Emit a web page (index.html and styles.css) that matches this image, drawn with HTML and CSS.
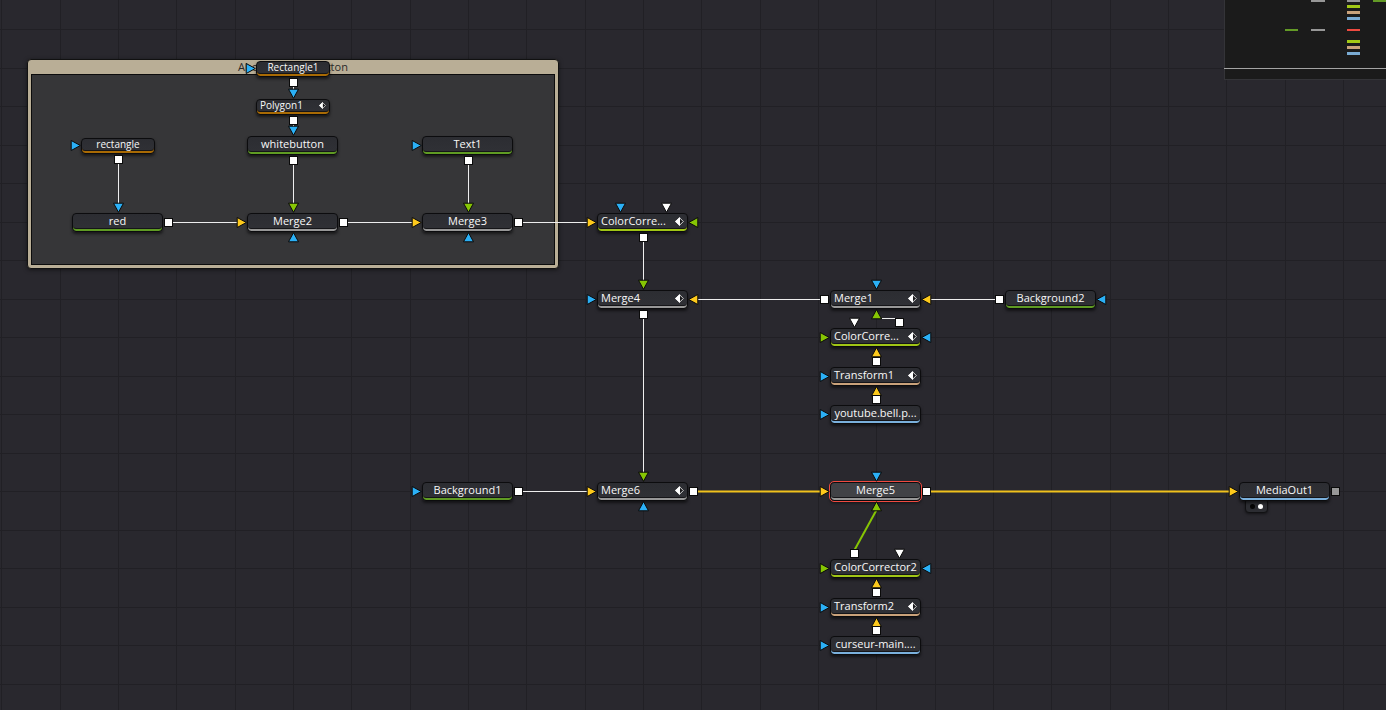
FILE: index.html
```html
<!DOCTYPE html>
<html lang="en">
<head>
<meta charset="utf-8">
<title>Node graph</title>
<link rel="stylesheet" href="styles.css">
</head>
<body>
<main class="graph">
  <section class="group">
    <h2 class="group-title">Abonnements button</h2>
    <div class="group-body"></div>
  </section>

  <svg class="wires" aria-hidden="true">
    <g class="wire">
      <path d="M118.500 164V204M293.500 87V90M293.500 125V127M293.500 165V204M468.500 165V204"/>
      <path d="M173 222.500H238M348 222.500H413M523 222.500H588"/>
      <path d="M643.500 242V281M643.500 319V473M698 299.500H820M931 299.500H995M882 318.500H896M523 491.500H588"/>
    </g>
    <path class="wire-yellow" d="M698 491.500H821M931 491.500H1230"/>
    <path class="wire-green" d="M854.500 550L876.500 510"/>
  </svg>

  <div class="node small brown n-rectangle"><span>rectangle</span></div>
  <div class="node small brown n-rectangle1"><span>Rectangle1</span></div>
  <div class="node small brown keyed n-polygon1"><span>Polygon1</span><svg class="key" viewBox="0 0 9 9"><use href="#key"/></svg></div>
  <div class="node green n-whitebutton"><span>whitebutton</span></div>
  <div class="node green n-text1"><span>Text1</span></div>
  <div class="node green n-red"><span>red</span></div>
  <div class="node gray n-merge2"><span>Merge2</span></div>
  <div class="node gray n-merge3"><span>Merge3</span></div>
  <div class="node lime keyed n-cc1"><span>ColorCorre...</span><svg class="key" viewBox="0 0 9 9"><use href="#key"/></svg></div>
  <div class="node gray keyed n-merge4"><span>Merge4</span><svg class="key" viewBox="0 0 9 9"><use href="#key"/></svg></div>
  <div class="node gray keyed n-merge1"><span>Merge1</span><svg class="key" viewBox="0 0 9 9"><use href="#key"/></svg></div>
  <div class="node green n-background2"><span>Background2</span></div>
  <div class="node lime keyed n-cc3"><span>ColorCorre...</span><svg class="key" viewBox="0 0 9 9"><use href="#key"/></svg></div>
  <div class="node tan keyed n-transform1"><span>Transform1</span><svg class="key" viewBox="0 0 9 9"><use href="#key"/></svg></div>
  <div class="node blue n-youtube"><span>youtube.bell.p...</span></div>
  <div class="node green n-background1"><span>Background1</span></div>
  <div class="node gray keyed n-merge6"><span>Merge6</span><svg class="key" viewBox="0 0 9 9"><use href="#key"/></svg></div>
  <div class="node gray selected n-merge5"><span>Merge5</span></div>
  <div class="node lime n-cc2"><span>ColorCorrector2</span></div>
  <div class="node tan keyed n-transform2"><span>Transform2</span><svg class="key" viewBox="0 0 9 9"><use href="#key"/></svg></div>
  <div class="node blue n-curseur"><span>curseur-main....</span></div>
  <div class="views"><i class="view"></i><i class="view on"></i></div>
  <div class="node blue n-mediaout1"><span>MediaOut1</span></div>

  <svg class="ports" aria-hidden="true">
    <defs>
      <path id="down" d="M-5 -4.300H5L0 4.800Z"/>
      <path id="up" d="M-5 4.300H5L0 -4.800Z"/>
      <path id="right" d="M-4.300 -5V5L4.800 0Z"/>
      <path id="left" d="M4.300 -5V5L-4.800 0Z"/>
      <rect id="out" x="-4" y="-4" width="8" height="8"/>
      <g id="key">
        <path d="M4.500 0.700L8.300 4.500L4.500 8.300L0.700 4.500Z" fill="#18181b" stroke="#d8d8d8"/>
        <path d="M5 0L0 4.500L5 9Z" fill="#fff"/>
      </g>
    </defs>
    <g class="port p-blue">
      <use href="#right" x="75.500" y="145.500"/>
      <use href="#right" x="250.500" y="68.500"/>
      <use href="#right" x="416.500" y="145.500"/>
      <use href="#right" x="591.500" y="299.500"/>
      <use href="#right" x="824.500" y="376.500"/>
      <use href="#right" x="824.500" y="414.500"/>
      <use href="#right" x="416.500" y="491.500"/>
      <use href="#right" x="824.500" y="607.500"/>
      <use href="#right" x="824.500" y="645.500"/>
      <use href="#left" x="1101.500" y="299.500"/>
      <use href="#left" x="926.500" y="337.500"/>
      <use href="#left" x="926.500" y="568.500"/>
      <use href="#down" x="118.500" y="207.500"/>
      <use href="#down" x="293.500" y="93.500"/>
      <use href="#down" x="293.500" y="130.500"/>
      <use href="#down" x="620.500" y="207.500"/>
      <use href="#down" x="876.500" y="284.500"/>
      <use href="#down" x="876.500" y="476.500"/>
      <use href="#up" x="293.500" y="237.500"/>
      <use href="#up" x="468.500" y="237.500"/>
      <use href="#up" x="643.500" y="506.500"/>
    </g>
    <g class="port p-yellow">
      <use href="#right" x="241.500" y="222.500"/>
      <use href="#right" x="416.500" y="222.500"/>
      <use href="#right" x="591.500" y="222.500"/>
      <use href="#right" x="591.500" y="491.500"/>
      <use href="#right" x="824.500" y="491.500"/>
      <use href="#right" x="1233.500" y="491.500"/>
      <use href="#left" x="693.500" y="299.500"/>
      <use href="#left" x="926.500" y="299.500"/>
      <use href="#up" x="876.500" y="352.500"/>
      <use href="#up" x="876.500" y="391.500"/>
      <use href="#up" x="876.500" y="583.500"/>
      <use href="#up" x="876.500" y="622.500"/>
    </g>
    <g class="port p-green">
      <use href="#down" x="293.500" y="207.500"/>
      <use href="#down" x="468.500" y="207.500"/>
      <use href="#down" x="643.500" y="284.500"/>
      <use href="#down" x="643.500" y="476.500"/>
      <use href="#left" x="693.500" y="222.500"/>
      <use href="#right" x="824.500" y="337.500"/>
      <use href="#right" x="824.500" y="568.500"/>
      <use href="#up" x="876.500" y="314.500"/>
      <use href="#up" x="876.500" y="506.500"/>
    </g>
    <g class="port p-white">
      <use href="#down" x="666.500" y="207.500"/>
      <use href="#down" x="854.500" y="322.500"/>
      <use href="#down" x="899.500" y="553.500"/>
      <use href="#out" x="118.500" y="159.500"/>
      <use href="#out" x="293.500" y="82.500"/>
      <use href="#out" x="293.500" y="120.500"/>
      <use href="#out" x="293.500" y="160.500"/>
      <use href="#out" x="468.500" y="160.500"/>
      <use href="#out" x="168.500" y="222.500"/>
      <use href="#out" x="343.500" y="222.500"/>
      <use href="#out" x="518.500" y="222.500"/>
      <use href="#out" x="643.500" y="237.500"/>
      <use href="#out" x="643.500" y="314.500"/>
      <use href="#out" x="824.500" y="299.500"/>
      <use href="#out" x="999.500" y="299.500"/>
      <use href="#out" x="899.500" y="322.500"/>
      <use href="#out" x="876.500" y="361.500"/>
      <use href="#out" x="876.500" y="399.500"/>
      <use href="#out" x="518.500" y="491.500"/>
      <use href="#out" x="693.500" y="491.500"/>
      <use href="#out" x="926.500" y="491.500"/>
      <use href="#out" x="854.500" y="553.500"/>
      <use href="#out" x="876.500" y="592.500"/>
      <use href="#out" x="876.500" y="630.500"/>
    </g>
    <g class="port p-gray"><use href="#out" x="1335.500" y="491.500"/></g>
  </svg>

  <aside class="minimap">
    <svg class="map" aria-hidden="true">
      <g fill="#979797"><path d="M86 0h14v2h-14zM122 0h13v2h-13zM86 29h14v2h-14z"/></g>
      <g fill="#639a26"><path d="M148 0h14v2h-14zM60 29h13v2h-13z"/></g>
      <g fill="#a3c916"><path d="M122 5h13v3h-13zM122 40h13v3h-13z"/></g>
      <g fill="#c9a27b"><path d="M122 11h13v3h-13zM122 46h13v3h-13z"/></g>
      <g fill="#7aabd3"><path d="M122 17h13v3h-13zM122 52h13v3h-13z"/></g>
      <path fill="#ee4a40" d="M122 29h13v2h-13z"/>
      <path fill="#a4a4a4" d="M-1 68h163v1h-163z"/>
    </svg>
  </aside>
</main>
</body>
</html>
```
FILE: styles.css
```css
* {
  box-sizing: border-box;
}

body {
  margin: 0;
  font-family: "Open Sans", "Noto Sans", sans-serif;
  font-size: 11px;
  color: #f8f8f8;
}

.graph {
  position: relative;
  height: 100vh;
  overflow: hidden;
  --line: #212025;
  background-color: #29282e;
  background-image:
    repeating-linear-gradient(to right, transparent 0 1px, var(--line) 1px 2px, transparent 2px 60px, var(--line) 60px 61px, transparent 61px 118px, var(--line) 118px 119px, transparent 119px 175px),
    repeating-linear-gradient(to bottom, transparent 0 29px, var(--line) 29px 30px, transparent 30px 68px, var(--line) 68px 69px, transparent 69px 77px);
}

.wires,
.ports {
  position: absolute;
  inset: 0;
  width: 100%;
  height: 100%;
  fill: none;
}

.wire {
  stroke: #eeeeee;
}

.wire-yellow {
  stroke: #f0c11c;
  stroke-width: 2;
}

.wire-green {
  stroke: #86c504;
  stroke-width: 2;
}

.port {
  stroke: #0a0a0a;
}

.p-blue { fill: #2bb0f6; }
.p-yellow { fill: #fdc91c; }
.p-green { fill: #86c504; }
.p-white { fill: #ffffff; }
.p-gray { fill: #979797; }

.group {
  position: absolute;
  left: 27px;
  top: 59px;
  width: 532px;
  height: 210px;
  display: flex;
  flex-direction: column;
  padding: 0 3px 3px;
  border: 1px solid #111111;
  border-radius: 4px;
  background: #b9ae96;
  box-shadow: 0 1px 4px rgba(0, 0, 0, 0.5);
}

.group-title {
  margin: 0;
  font-size: 11px;
  font-weight: 400;
  line-height: 14px;
  text-align: center;
  color: #2b2a2a;
}

.group-body {
  flex: 1;
  border: 1px solid #0c0c0c;
  background: #363638;
}

.node {
  position: absolute;
  width: 91px;
  height: 19px;
  display: flex;
  align-items: center;
  justify-content: center;
  padding-bottom: 3px;
  border: 1px solid #0c0c0e;
  border-radius: 4px;
  background: linear-gradient(#2c2d32, #303136);
  box-shadow: inset 0 -2px var(--strip), inset 0 -3px #151518, 0 2px 3px rgba(0, 0, 0, 0.55);
  line-height: 14px;
  white-space: nowrap;
}

.small {
  width: 74px;
  height: 16px;
  padding-bottom: 4px;
  font-size: 10px;
  line-height: 12px;
}

.keyed {
  justify-content: space-between;
  padding-left: 3px;
  padding-right: 3px;
}

.key {
  width: 9px;
  height: 9px;
}

.small .key {
  width: 7px;
  height: 7px;
}

.selected {
  background: #414246;
  outline: 1px solid #f04a40;
}

.brown { --strip: #a86a04; }
.green { --strip: #5f9b23; }
.gray { --strip: #979797; }
.lime { --strip: #a0c515; }
.tan { --strip: #caa27a; }
.blue { --strip: #7ab0dc; }

.n-rectangle { left: 81px; top: 138px; }
.n-rectangle1 { left: 256px; top: 61px; }
.n-polygon1 { left: 256px; top: 99px; }
.n-whitebutton { left: 247px; top: 136px; }
.n-text1 { left: 422px; top: 136px; }
.n-red { left: 72px; top: 213px; }
.n-merge2 { left: 247px; top: 213px; }
.n-merge3 { left: 422px; top: 213px; }
.n-cc1 { left: 597px; top: 213px; }
.n-merge4 { left: 597px; top: 290px; }
.n-merge1 { left: 830px; top: 290px; }
.n-background2 { left: 1005px; top: 290px; }
.n-cc3 { left: 830px; top: 328px; }
.n-transform1 { left: 830px; top: 367px; }
.n-youtube { left: 830px; top: 405px; }
.n-background1 { left: 422px; top: 482px; }
.n-merge6 { left: 597px; top: 482px; }
.n-merge5 { left: 830px; top: 482px; }
.n-cc2 { left: 830px; top: 559px; }
.n-transform2 { left: 830px; top: 598px; }
.n-curseur { left: 830px; top: 636px; }
.n-mediaout1 { left: 1239px; top: 482px; }

.views {
  position: absolute;
  left: 1245px;
  top: 498px;
  display: flex;
  gap: 3px;
  padding: 5px 4px 3px;
  border: 1px solid #111113;
  border-radius: 4px;
  background: #2c2d32;
  box-shadow: 0 1px 3px rgba(0, 0, 0, 0.55);
}

.view {
  width: 5px;
  height: 5px;
  border-radius: 50%;
  background: #050505;
}

.on {
  background: #ffffff;
}

.minimap {
  position: absolute;
  top: 0;
  right: 0;
  width: 162px;
  height: 80px;
  border: solid #343438;
  border-width: 0 0 1px 1px;
  background: #1b1b1b;
}

.map {
  display: block;
  width: 100%;
  height: 100%;
  overflow: visible;
}
```
